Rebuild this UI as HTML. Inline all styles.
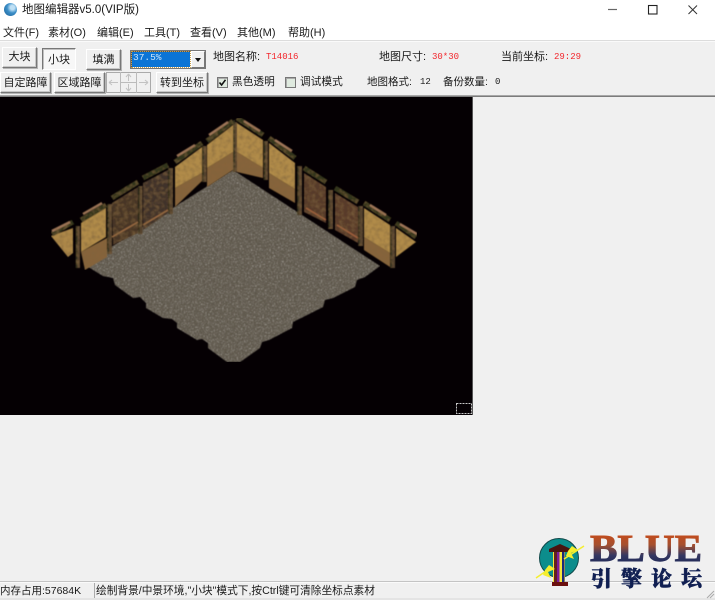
<!DOCTYPE html>
<html>
<head>
<meta charset="utf-8">
<style>
html,body{margin:0;padding:0}
body{width:715px;height:600px;overflow:hidden;background:#f0f0f0;position:relative;font-family:"Liberation Sans","Noto Sans CJK SC",sans-serif;font-size:11px;color:#1a1a1a}
.a{position:absolute;white-space:nowrap}
.t{position:absolute;white-space:nowrap;line-height:14px;filter:blur(.3px)}
.m{font-family:"Liberation Mono","Noto Sans CJK SC",monospace;font-size:9px}
.r{color:#f2262c}
.b{position:absolute;box-sizing:border-box;background:#f0f0f0;border:1px solid;border-color:#fff #777 #777 #fff;box-shadow:1px 1px 0 #b5b5b5,inset -1px -1px 0 #c8c8c8;text-align:center;font-size:11px;white-space:nowrap;filter:blur(.25px)}
.cb{position:absolute;box-sizing:border-box;width:11px;height:11px;border:1px solid #777;background:#dfeadf;box-shadow:inset 1px 1px 0 #aaa}
</style>
</head>
<body>
<!-- title bar -->
<div class="a" style="left:0;top:0;width:715px;height:40px;background:#fff"></div>
<div class="a" style="left:4px;top:3px;width:13px;height:13px;border-radius:50%;background:radial-gradient(circle at 65% 35%,#bfe0f5 0 18%,#3c8fc8 45%,#1b5f96 100%)"></div>
<div class="t" style="left:22px;top:3px;font-size:11.5px">地图编辑器v5.0(VIP版)</div>
<div class="t" style="left:3px;top:26px">文件(F)</div>
<div class="t" style="left:48px;top:26px">素材(O)</div>
<div class="t" style="left:97px;top:26px">编辑(E)</div>
<div class="t" style="left:144px;top:26px">工具(T)</div>
<div class="t" style="left:190px;top:26px">查看(V)</div>
<div class="t" style="left:237px;top:26px">其他(M)</div>
<div class="t" style="left:288px;top:26px">帮助(H)</div>
<svg class="a" style="left:600px;top:0" width="115" height="20" viewBox="0 0 115 20">
<path d="M8 9.5H17" stroke="#666" stroke-width="1.2" fill="none"/>
<rect x="48.5" y="5.5" width="8.5" height="8.5" stroke="#222" stroke-width="1.1" fill="none"/>
<path d="M88.5 5.5L97 14M97 5.5L88.5 14" stroke="#333" stroke-width="1" fill="none"/>
</svg>

<!-- toolbar -->
<div class="a" style="left:0;top:40px;width:715px;height:1px;background:#dcdcdc"></div>
<div class="a" style="left:0;top:41px;width:715px;height:1px;background:#fafafa"></div>
<div class="a" style="left:0;top:95px;width:715px;height:1px;background:#a8a8a8"></div>
<div class="a" style="left:0;top:96px;width:715px;height:1px;background:#7c7c7c"></div>

<div class="b" style="left:2px;top:47px;width:35px;height:21px;line-height:19px">大块</div>
<div class="b" style="left:42px;top:48px;width:34px;height:22px;line-height:23px;background:#f7f7f7;border-color:#777 #fff #fff #777;box-shadow:inset 1px 1px 0 #c0c0c0">小块</div>
<div class="b" style="left:86px;top:49px;width:35px;height:21px;line-height:20px">填满</div>

<div class="a" style="left:130px;top:50px;width:76px;height:19px;box-sizing:border-box;background:#fff;border:1px solid #777;box-shadow:inset 1px 1px 0 #555"></div>
<div class="a" style="left:132px;top:52px;width:58px;height:15px;background:#0a74d6;outline:1px dotted #c9a04a;outline-offset:0"></div>
<div class="t m" style="left:133px;top:51px;color:#cfe6fb;font-size:9.5px">37.5%</div>
<div class="a" style="left:191px;top:51px;width:14px;height:17px;box-sizing:border-box;background:#f0f0f0;border:1px solid;border-color:#fff #777 #777 #fff"></div>
<div class="a" style="left:195px;top:58px;width:0;height:0;border-left:3.5px solid transparent;border-right:3.5px solid transparent;border-top:4px solid #111"></div>

<div class="t" style="left:213px;top:50px">地图名称:</div>
<div class="t m r" style="left:266px;top:50px">T14016</div>
<div class="t" style="left:379px;top:50px">地图尺寸:</div>
<div class="t m r" style="left:432px;top:50px">30*30</div>
<div class="t" style="left:501px;top:50px">当前坐标:</div>
<div class="t m r" style="left:554px;top:50px">29:29</div>

<div class="b" style="left:0;top:72px;width:51px;height:21px;line-height:20px">自定路障</div>
<div class="b" style="left:54px;top:72px;width:51px;height:21px;line-height:20px">区域路障</div>
<svg class="a" style="left:106px;top:71px" width="46" height="23" viewBox="0 0 46 23">
<rect x=".5" y="1.5" width="44" height="20" fill="#f0f0f0" stroke="#aaa"/>
<path d="M14.5 1V22M30.5 1V22M15 11.5H30" stroke="#bbb" fill="none"/>
<path d="M3 11.5H12M3 11.5L6 9M3 11.5L6 14M42 11.5H33M42 11.5L39 9M42 11.5L39 14M22.5 3V10M22.5 3L20 6M22.5 3L25 6M22.5 20V13M22.5 20L20 17M22.5 20L25 17" stroke="#c2c2c2" fill="none"/>
</svg>
<div class="b" style="left:156px;top:72px;width:52px;height:21px;line-height:20px">转到坐标</div>
<div class="cb" style="left:217px;top:77px"></div>
<svg class="a" style="left:217px;top:77px" width="11" height="11"><path d="M2.5 5.5L4.6 8L8.500 2.800" stroke="#111" stroke-width="1.6" fill="none"/></svg>
<div class="t" style="left:232px;top:75px;font-size:10.700px">黑色透明</div>
<div class="cb" style="left:285px;top:77px"></div>
<div class="t" style="left:300px;top:75px;font-size:10.700px">调试模式</div>
<div class="t" style="left:367px;top:75px;font-size:10.500px">地图格式:</div>
<div class="t m" style="left:420px;top:75px">12</div>
<div class="t" style="left:443px;top:75px;font-size:10.500px">备份数量:</div>
<div class="t m" style="left:495px;top:75px">0</div>

<!-- canvas -->
<svg class="a" style="left:0;top:97px" width="473" height="318" viewBox="0 97 473 318">
<defs>
<filter id="n" x="0" y="0" width="100%" height="100%">
<feTurbulence type="fractalNoise" baseFrequency=".7" numOctaves="2" seed="4" result="t"/>
<feColorMatrix in="t" type="matrix" values="0 0 0 0 .5  0 0 0 0 .47  0 0 0 0 .42  2.2 0 0 0 -1.15"/>
<feComposite in2="SourceAlpha" operator="in" result="g"/>
<feTurbulence type="fractalNoise" baseFrequency=".8" numOctaves="1" seed="9"/>
<feColorMatrix type="matrix" values="0 0 0 0 .16  0 0 0 0 .14  0 0 0 0 .11  0 2.6 0 0 -1.05"/>
<feComposite in2="SourceAlpha" operator="in" result="d"/>
<feMerge><feMergeNode in="SourceGraphic"/><feMergeNode in="g"/><feMergeNode in="d"/></feMerge>
<feGaussianBlur stdDeviation=".45"/>
</filter>
<filter id="w" x="0" y="0" width="100%" height="100%">
<feTurbulence type="fractalNoise" baseFrequency=".25" numOctaves="2" seed="6"/>
<feColorMatrix type="matrix" values="0 0 0 0 .22  0 0 0 0 .13  0 0 0 0 .05  1.4 0 0 0 -.55"/>
<feComposite in2="SourceAlpha" operator="in" result="g"/>
<feMerge><feMergeNode in="SourceGraphic"/><feMergeNode in="g"/></feMerge>
<feGaussianBlur stdDeviation=".4"/>
</filter>
</defs>
<rect x="0" y="97" width="473" height="318" fill="#050003"/>
<rect x="472" y="97" width="1" height="318" fill="#555"/>
<!-- floor -->
<path filter="url(#n)" fill="#5b5448" d="M233 170L380 266L365 277L357 280L355 287L333 298L325 300L323 307L301 318L293 322L292 328L269 340L262 342L260 348L240 362H227L208 348V343L202 339L197 340L177 328V323L172 319L163 318L146 308V303L140 297L133 298L115 285L113 278L103 276L90 268L84 264Z"/>
<g filter="url(#w)">
<!-- left wall -->
<path d="M51 236L73 228V253L68 257Z" fill="#ad884a"/>
<path d="M81 223L106 208V237L81 252Z" fill="#b08b4a"/>
<path d="M81 252L107 238V257L85 270Z" fill="#86643a"/>
<path d="M112 203L138 187V233L113 245Z" fill="#463428"/>
<path d="M143 183L168 170V213L143 230Z" fill="#413129"/>
<path d="M175 167L202 147V173L175 188Z" fill="#b08b4a"/>
<path d="M175 188L202 173V181L175 207Z" fill="#86643a"/>
<path d="M207 145L233 125V152L207 168Z" fill="#b08b4a"/>
<path d="M207 168L233 152V170L207 187Z" fill="#86643a"/>
<!-- right wall -->
<path d="M237 123L263 140V168L237 152Z" fill="#b08b4a"/>
<path d="M237 152L263 168V178L237 172Z" fill="#86643a"/>
<path d="M269 143L295 163V189L269 173Z" fill="#b08b4a"/>
<path d="M269 173L295 189V203L269 188Z" fill="#86643a"/>
<path d="M304 173L326 187V223L304 212Z" fill="#573a2a"/>
<path d="M335 193L358 207V243L335 230Z" fill="#593b2b"/>
<path d="M364 208L390 225V253L364 237Z" fill="#b08b4a"/>
<path d="M364 237L390 253V267L364 250Z" fill="#86643a"/>
<path d="M396 228L416 242L396 257Z" fill="#b08b4a"/>
<!-- pillars -->
<path d="M78 226V268M110 204V254M140.500 186V234M171 168V214M204.500 146V182M235 122V172M266 141V180M300 166V215M331 190V229M361 206V246M393 226V268" stroke="#54432d" stroke-width="4" fill="none"/>
<path d="M76.500 226V268M108 204V254M139 186V234M169 168V214M203 146V182M234 120V172M264.500 141V180M298 166V215M329 190V229M359 206V246M391 226V268" stroke="#30301e" stroke-width="1.500" fill="none"/>
<!-- top beams -->
<path d="M52 234L73 222M81 220L106 205M112 198L138 182M143 178L168 165M175 162L202 143M207 141L233 121M237 118L263 135M269 138L295 158M304 168L326 182M335 188L358 202M364 203L390 220M396 223L416 237" stroke="#33351e" stroke-width="5" fill="none"/>
<!-- caps -->
<path d="M52 231L70 222M83 214L102 203M177 156L195 145M209 135L228 122M244 121L260 131M275 140L292 151M370 205L386 215M400 224L417 234" stroke="#a0775a" stroke-width="2.400" fill="none"/>
<path d="M112 237L138 222M143 225L168 210" stroke="#9a6a42" stroke-width="1.500" fill="none"/>
<path d="M306 208L326 220M337 225L358 238" stroke="#a0603c" stroke-width="1.500" fill="none"/>
</g>
<rect x="456.500" y="403.500" width="15" height="10" fill="none" stroke="#c8c8c8" stroke-dasharray="2 1"/>
</svg>

<!-- status bar -->
<div class="a" style="left:0;top:581px;width:715px;height:1px;background:#c4c4c4"></div>
<div class="a" style="left:0;top:582px;width:715px;height:1px;background:#fafafa"></div>
<div class="t" style="left:0;top:584px;font-size:10.500px">内存占用:57684K</div>
<div class="a" style="left:94px;top:583px;width:1px;height:15px;background:#aaa"></div>
<div class="t" style="left:96px;top:584px;font-size:10.700px">绘制背景/中景环境,"小块"模式下,按Ctrl键可清除坐标点素材</div>
<div class="a" style="left:0;top:598px;width:715px;height:2px;background:#e4e4e4"></div>

<!-- logo -->
<svg class="a" style="left:530px;top:525px" width="185" height="75" viewBox="530 525 185 75">
<defs>
<linearGradient id="bl" x1="0" y1="0" x2="0" y2="1">
<stop offset="0" stop-color="#d8480f"/><stop offset=".4" stop-color="#a5502f"/><stop offset=".65" stop-color="#353862"/><stop offset="1" stop-color="#101f52"/>
</linearGradient>
</defs>
<circle cx="559" cy="558" r="19.500" fill="#0c8d8c" stroke="#11494a" stroke-width="1"/>
<rect x="553" y="552" width="12" height="33" fill="#f6e83b"/>
<rect x="554" y="552" width="3" height="33" fill="#641f1f"/>
<rect x="557" y="552" width="2.500" height="33" fill="#7d1a9a"/>
<rect x="562" y="552" width="2.500" height="33" fill="#1d2a7a"/>
<path d="M549 549L560 544L571 549V552H549Z" fill="#4a1410"/>
<rect x="552" y="582" width="16" height="4" fill="#6b0f0f"/>
<path d="M564 559L584 546M536 578L552 567" stroke="#f5ee2e" stroke-width="1.500"/>
<path d="M572 546L578 550L571 553L574 559L566 556L568 551Z" fill="#f5ee2e"/>
<path d="M549 565L555 569L548 572L551 578L543 575L545 570Z" fill="#f5ee2e"/>
<text x="590" y="561" font-family="Liberation Serif" font-weight="700" font-size="38" textLength="112" lengthAdjust="spacingAndGlyphs" fill="url(#bl)" stroke="url(#bl)" stroke-width=".9">BLUE</text>
<text x="591" y="586" font-family="Noto Serif CJK SC,serif" font-weight="900" font-size="21" letter-spacing="9" fill="#101f52" stroke="#101f52" stroke-width=".5">引擎论坛</text>
<path d="M707 598L714 591M710 598L714 594" stroke="#aaa" fill="none"/>
</svg>
</body>
</html>
